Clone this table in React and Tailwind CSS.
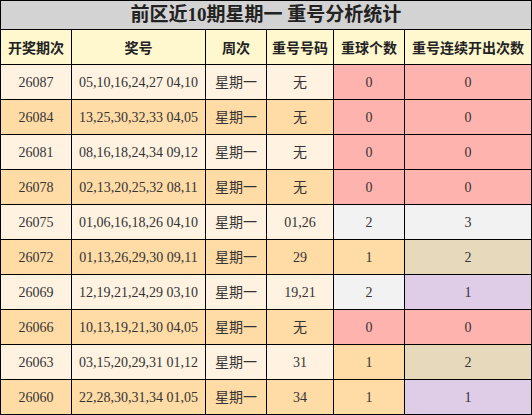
import React from "react";

const rows = [
  ["26087", "05,10,16,24,27 04,10", "无", 0, 0],
  ["26084", "13,25,30,32,33 04,05", "无", 0, 0],
  ["26081", "08,16,18,24,34 09,12", "无", 0, 0],
  ["26078", "02,13,20,25,32 08,11", "无", 0, 0],
  ["26075", "01,06,16,18,26 04,10", "01,26", 2, 3],
  ["26072", "01,13,26,29,30 09,11", "29", 1, 2],
  ["26069", "12,19,21,24,29 03,10", "19,21", 2, 1],
  ["26066", "10,13,19,21,30 04,05", "无", 0, 0],
  ["26063", "03,15,20,29,31 01,12", "31", 1, 2],
  ["26060", "22,28,30,31,34 01,05", "34", 1, 1],
];

const countBg = {
  0: "bg-[#ffb3ae]",
  1: "bg-[#ffdba6]",
  2: "bg-[#f2f2f2]",
};
const streakBg = {
  0: "bg-[#ffb3ae]",
  1: "bg-[#dfcce6]",
  2: "bg-[#e6d9bc]",
  3: "bg-[#f2f2f2]",
};

const headers = ["开奖期次", "奖号", "周次", "重号号码", "重球个数", "重号连续开出次数"];

export default function App() {
  return (
    <div
      className="w-[532px] h-[415px] bg-black p-px grid gap-px grid-cols-[70px_133px_60px_66px_70px_126px] grid-rows-[28px_34px_repeat(10,34px)] text-[14px] text-[#333]"
      style={{ fontFamily: '"Liberation Serif", "Noto Sans CJK SC", serif' }}
    >
      <div className="col-span-6 bg-[#d3d3d3] flex items-center justify-center font-bold text-[19px] text-[#222]">
        前区近10期星期一 重号分析统计
      </div>
      {headers.map((h) => (
        <div
          key={h}
          className="bg-[#fff8cf] flex items-center justify-center font-bold text-[14px] text-[#222]"
          style={{ fontFamily: '"Noto Sans CJK SC", sans-serif' }}
        >
          {h}
        </div>
      ))}
      {rows.map((r, i) => {
        const rowBg = i % 2 === 0 ? "bg-[#fff2e0]" : "bg-[#ffdba6]";
        return (
          <React.Fragment key={r[0]}>
            <div className={`${rowBg} flex items-center justify-center`}>{r[0]}</div>
            <div className={`${rowBg} flex items-center justify-center`}>{r[1]}</div>
            <div className={`${rowBg} flex items-center justify-center`}>星期一</div>
            <div className={`${rowBg} flex items-center justify-center`}>{r[2]}</div>
            <div className={`${countBg[r[3]]} flex items-center justify-center`}>{r[3]}</div>
            <div className={`${streakBg[r[4]]} flex items-center justify-center`}>{r[4]}</div>
          </React.Fragment>
        );
      })}
    </div>
  );
}
